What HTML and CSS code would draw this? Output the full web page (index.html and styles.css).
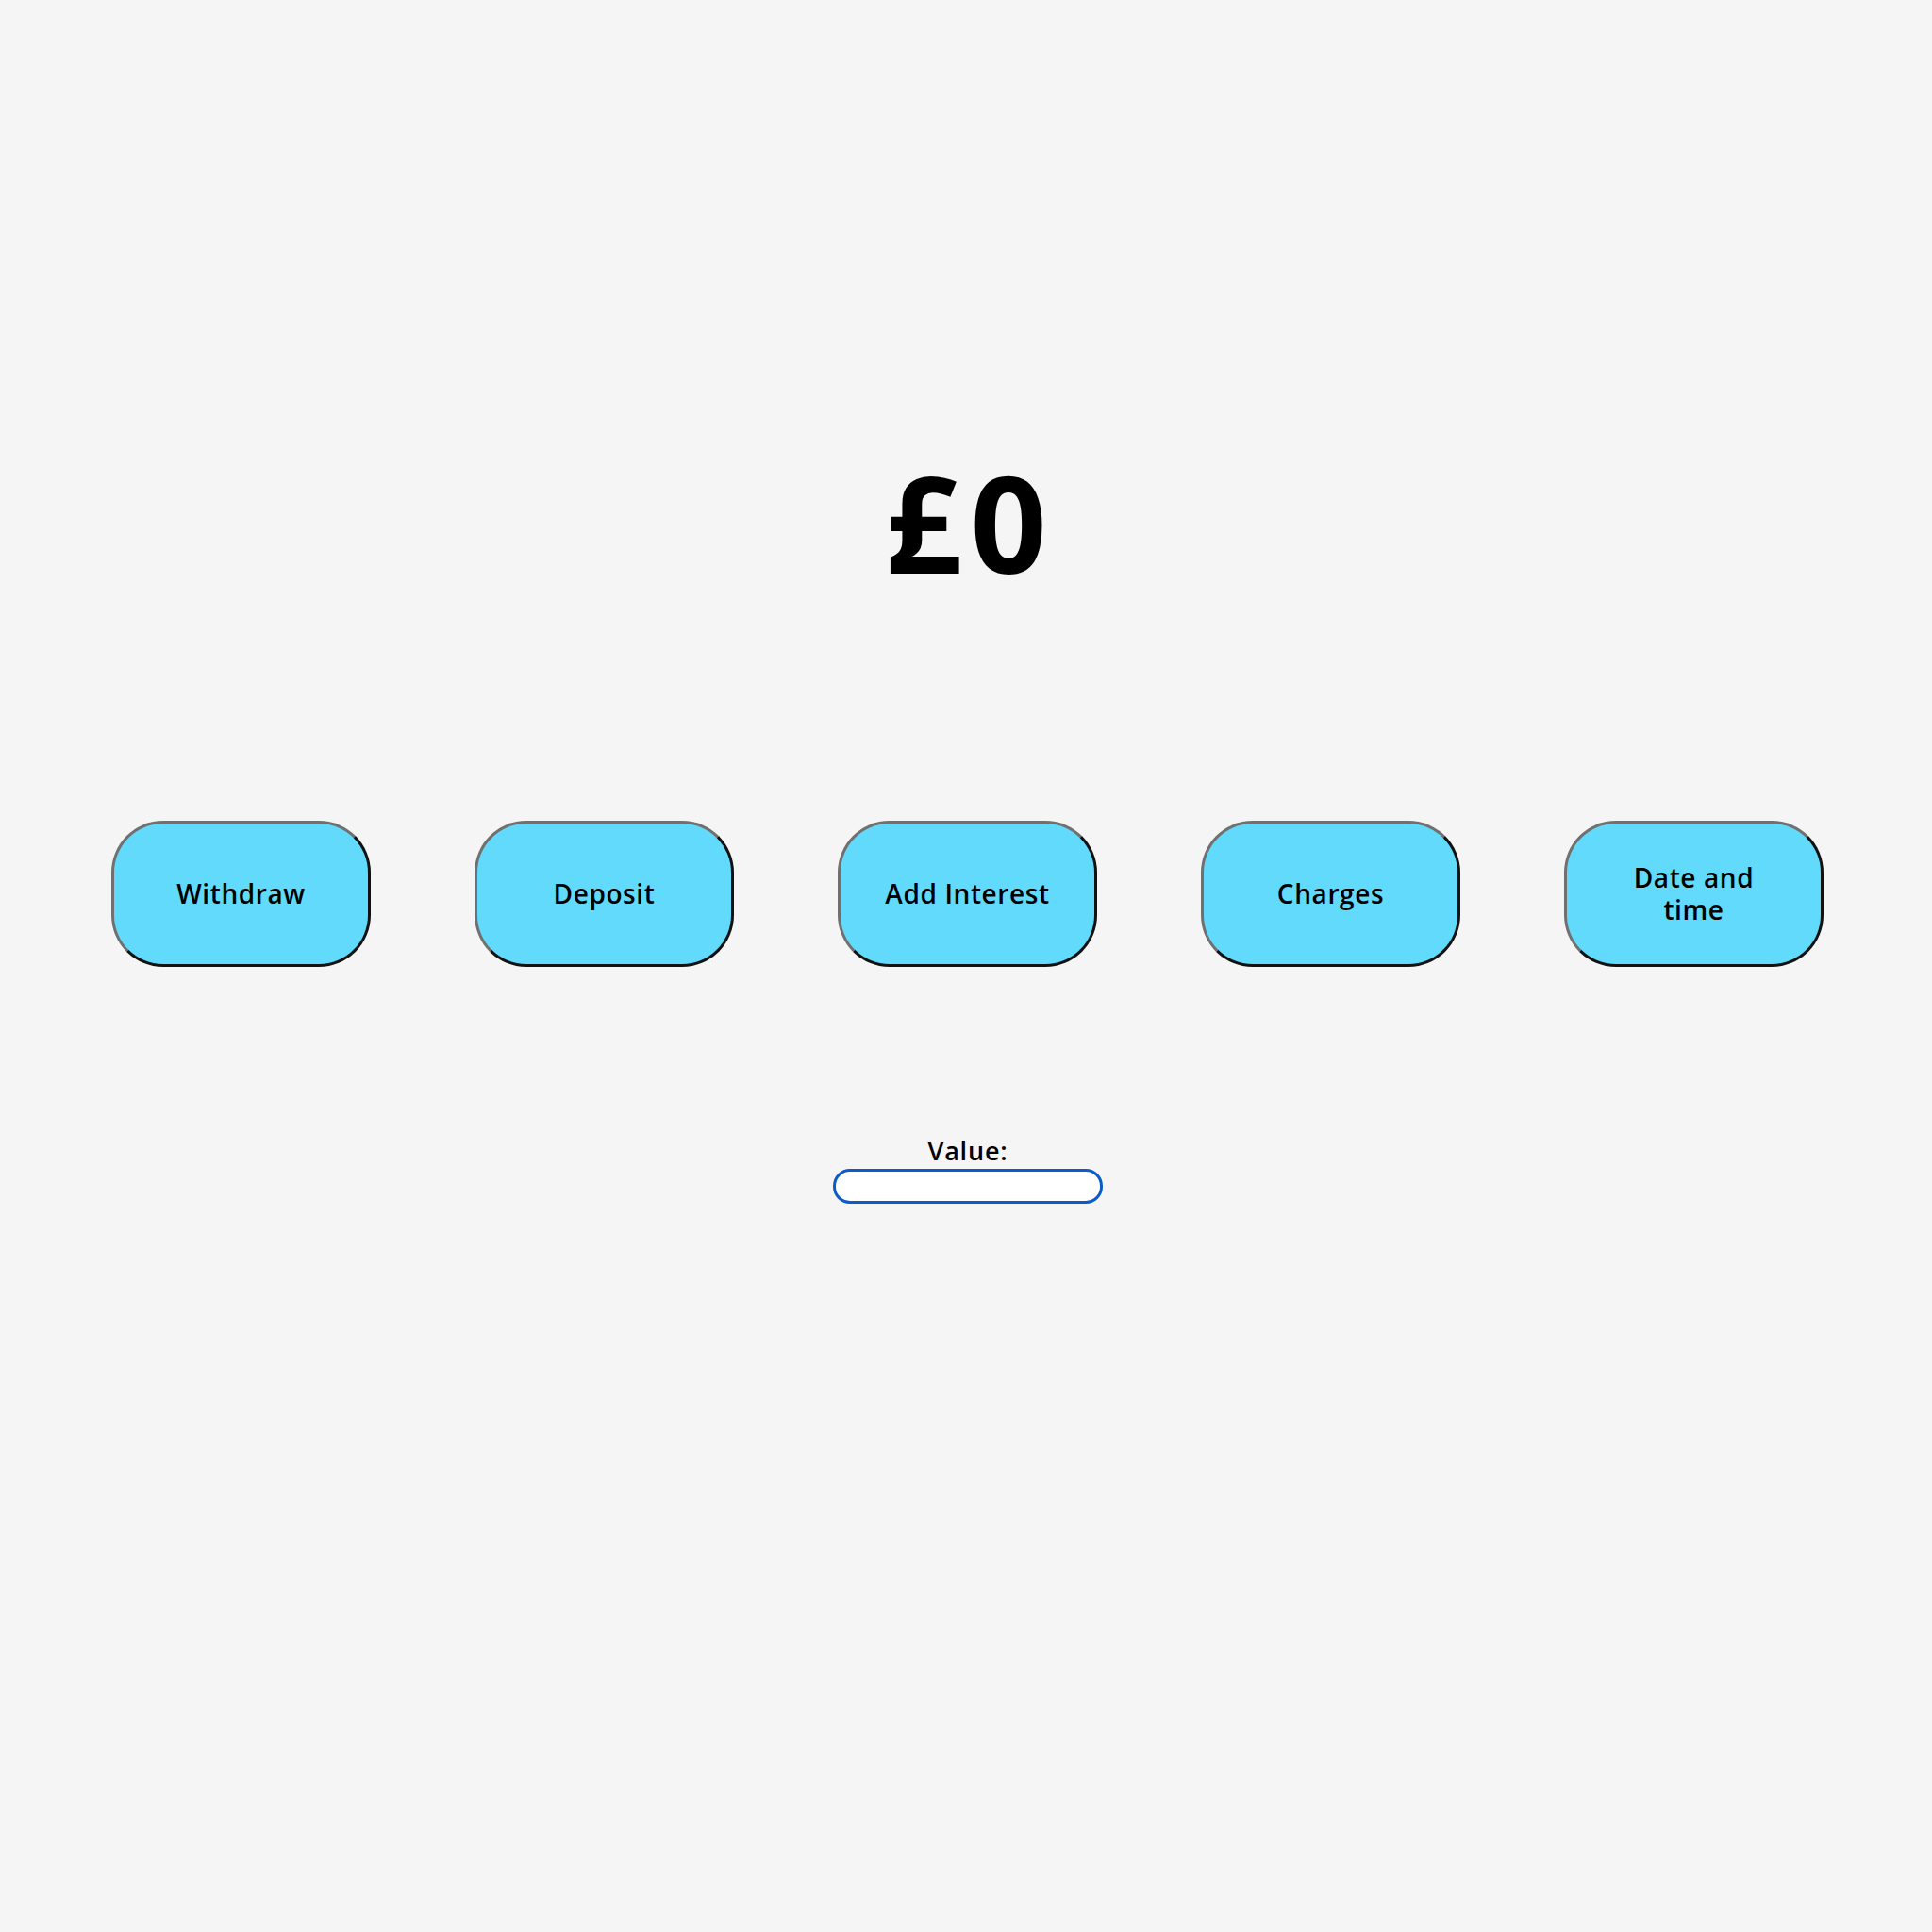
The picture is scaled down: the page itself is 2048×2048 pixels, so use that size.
FILE: index.html
```html
<!DOCTYPE html>
<html>
<head>
<meta charset="utf-8">
<link rel="stylesheet" href="styles.css">
</head>
<body>
<main class="app">
  <h1 class="balance">£0</h1>
  <div class="actions">
    <button class="action">Withdraw</button>
    <button class="action">Deposit</button>
    <button class="action action-wide">Add Interest</button>
    <button class="action">Charges</button>
    <button class="action">Date and time</button>
  </div>
  <div class="field">
    <label class="field-label" for="value">Value:</label>
    <input class="field-input" id="value" type="text">
  </div>
</main>
</body>
</html>
```

FILE: styles.css
```css
html, body {
  margin: 0;
  padding: 0;
  background: #f5f5f5;
  width: 2048px;
  height: 2048px;
}
.app {
  display: flex;
  flex-direction: column;
  align-items: center;
  font-family: "Open Sans", "DejaVu Sans", sans-serif;
  color: #000;
}
.balance {
  margin: 482px 0 0 0;
  padding-left: 9px;
  font-size: 142px;
  font-weight: 700;
  line-height: 1;
  letter-spacing: 9px;
}
.actions {
  display: flex;
  gap: 110px;
  margin-top: 246px;
  padding-left: 3px;
}
.action {
  width: 275px;
  height: 155px;
  box-sizing: border-box;
  background: #61dafb;
  border: 3px solid;
  border-color: #707070 #111 #111 #707070;
  border-radius: 55px;
  font-family: inherit;
  font-size: 28px;
  font-weight: 600;
  letter-spacing: 0.6px;
  color: #000;
  padding: 0 52px;
  line-height: 1.2;
}
.action.action-wide {
  padding: 0 20px;
}
.field {
  display: flex;
  flex-direction: column;
  align-items: center;
  margin-top: 179px;
  padding-left: 4px;
}
.field-label {
  font-size: 27px;
  font-weight: 600;
  letter-spacing: 0.8px;
  line-height: 1.2;
}
.field-input {
  width: 286px;
  height: 37px;
  box-sizing: border-box;
  border: 3px solid #0b5cc8;
  border-radius: 18px;
  background: #fff;
  outline: none;
  margin-top: 3px;
}
```
